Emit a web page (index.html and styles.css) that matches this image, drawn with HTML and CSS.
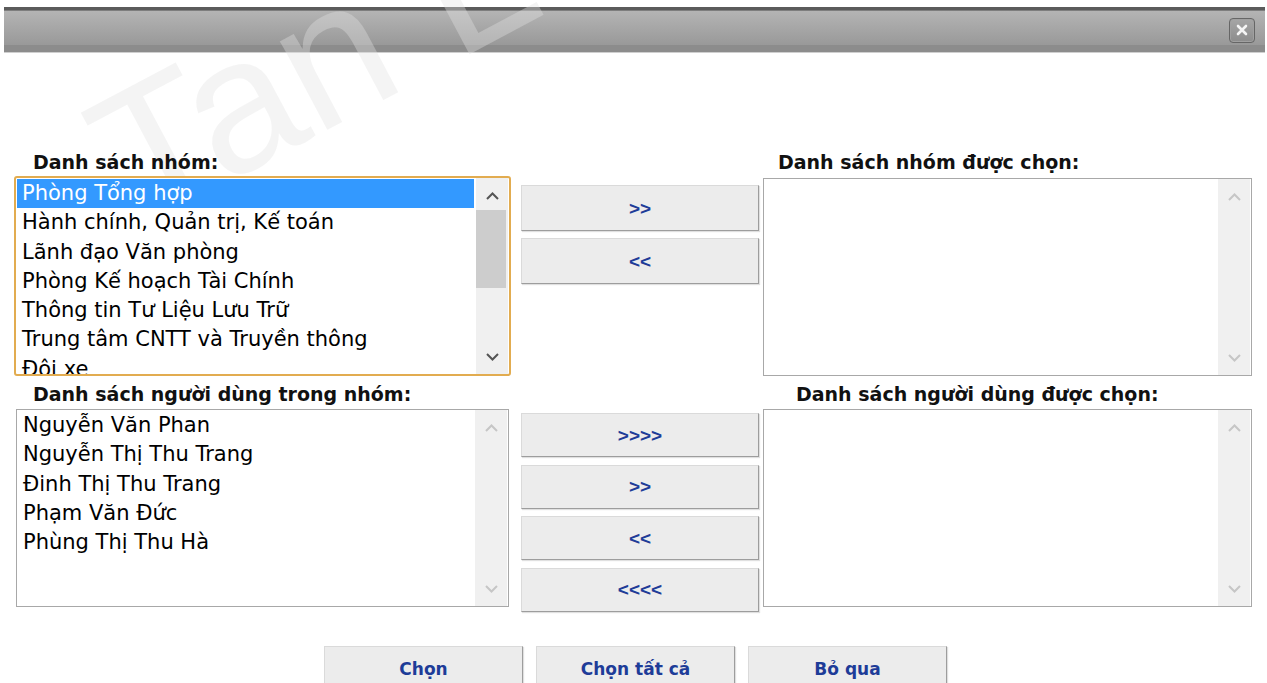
FILE: index.html
```html
<!DOCTYPE html>
<html lang="vi">
<head>
<meta charset="utf-8">
<title>Chọn người dùng</title>
<link rel="stylesheet" href="styles.css">
</head>
<body>
  <div class="titlebar">
    <button class="close" type="button" aria-label="Đóng">
      <svg width="12" height="12" viewBox="0 0 12 12"><path d="M2 2 L10 10 M10 2 L2 10" stroke="#fff" stroke-width="2.6" stroke-linecap="round"/></svg>
    </button>
  </div>

  <div class="watermark" aria-hidden="true">Tan L</div>

  <main class="content">
    <section class="picker picker-groups">
      <div class="label label-left">Danh sách nhóm:</div>
      <div class="label label-right">Danh sách nhóm được chọn:</div>

      <div class="listbox listbox-focus">
        <ul class="items">
          <li class="selected">Phòng Tổng hợp</li>
          <li>Hành chính, Quản trị, Kế toán</li>
          <li>Lãnh đạo Văn phòng</li>
          <li>Phòng Kế hoạch Tài Chính</li>
          <li>Thông tin Tư Liệu Lưu Trữ</li>
          <li>Trung tâm CNTT và Truyền thông</li>
          <li>Đội xe</li>
        </ul>
        <div class="scrollbar scrollbar-active">
          <svg class="chev" width="13" height="8" viewBox="0 0 13 8"><path d="M1 7 L6.5 1.5 L12 7" fill="none" stroke="currentColor" stroke-width="2"/></svg>
          <div class="thumb"></div>
          <div class="track-fill"></div>
          <svg class="chev" width="13" height="8" viewBox="0 0 13 8"><path d="M1 1 L6.5 6.5 L12 1" fill="none" stroke="currentColor" stroke-width="2"/></svg>
        </div>
      </div>

      <div class="moves moves-groups">
        <button class="btn btn-move" type="button">&gt;&gt;</button>
        <button class="btn btn-move" type="button">&lt;&lt;</button>
      </div>

      <div class="listbox listbox-right">
        <ul class="items"></ul>
        <div class="scrollbar">
          <svg class="chev" width="13" height="8" viewBox="0 0 13 8"><path d="M1 7 L6.5 1.5 L12 7" fill="none" stroke="currentColor" stroke-width="2"/></svg>
          <div class="track-fill"></div>
          <svg class="chev" width="13" height="8" viewBox="0 0 13 8"><path d="M1 1 L6.5 6.5 L12 1" fill="none" stroke="currentColor" stroke-width="2"/></svg>
        </div>
      </div>
    </section>

    <section class="picker picker-users">
      <div class="label label-left">Danh sách người dùng trong nhóm:</div>
      <div class="label label-right label-right-users">Danh sách người dùng được chọn:</div>

      <div class="listbox listbox-left">
        <ul class="items">
          <li>Nguyễn Văn Phan</li>
          <li>Nguyễn Thị Thu Trang</li>
          <li>Đinh Thị Thu Trang</li>
          <li>Phạm Văn Đức</li>
          <li>Phùng Thị Thu Hà</li>
        </ul>
        <div class="scrollbar">
          <svg class="chev" width="13" height="8" viewBox="0 0 13 8"><path d="M1 7 L6.5 1.5 L12 7" fill="none" stroke="currentColor" stroke-width="2"/></svg>
          <div class="track-fill"></div>
          <svg class="chev" width="13" height="8" viewBox="0 0 13 8"><path d="M1 1 L6.5 6.5 L12 1" fill="none" stroke="currentColor" stroke-width="2"/></svg>
        </div>
      </div>

      <div class="moves moves-users">
        <button class="btn btn-move btn-small" type="button">&gt;&gt;&gt;&gt;</button>
        <button class="btn btn-move btn-small" type="button">&gt;&gt;</button>
        <button class="btn btn-move btn-small" type="button">&lt;&lt;</button>
        <button class="btn btn-move btn-small" type="button">&lt;&lt;&lt;&lt;</button>
      </div>

      <div class="listbox listbox-right">
        <ul class="items"></ul>
        <div class="scrollbar">
          <svg class="chev" width="13" height="8" viewBox="0 0 13 8"><path d="M1 7 L6.5 1.5 L12 7" fill="none" stroke="currentColor" stroke-width="2"/></svg>
          <div class="track-fill"></div>
          <svg class="chev" width="13" height="8" viewBox="0 0 13 8"><path d="M1 1 L6.5 6.5 L12 1" fill="none" stroke="currentColor" stroke-width="2"/></svg>
        </div>
      </div>
    </section>

    <div class="actions">
      <button class="btn btn-action" type="button">Chọn</button>
      <button class="btn btn-action" type="button">Chọn tất cả</button>
      <button class="btn btn-action" type="button">Bỏ qua</button>
    </div>
  </main>
</body>
</html>
```

FILE: styles.css
```css
* {
  box-sizing: border-box;
}

html,
body {
  margin: 0;
  padding: 0;
  background: #fff;
}

body {
  position: relative;
  width: 1267px;
  height: 683px;
  overflow: hidden;
  font-family: "DejaVu Sans", "Liberation Sans", sans-serif;
  color: #000;
}

/* Window header */
.titlebar {
  margin: 7px 2px 0 4px;
  height: 46px;
  padding-right: 10px;
  display: flex;
  align-items: center;
  justify-content: flex-end;
  background: linear-gradient(to bottom,
    #5b5b5b 0, #5b5b5b 3px,
    #7e7e7e 3px, #7e7e7e 4px,
    #b4b4b4 4px, #999999 38px,
    #8c8c8c 38px, #8c8c8c 45px,
    #cfcfcf 45px, #cfcfcf 46px);
}

.close {
  width: 26px;
  height: 25px;
  padding: 0;
  border: 1px solid #666;
  border-radius: 4px;
  background: linear-gradient(to bottom, #a6a6a6, #8c8c8c);
  box-shadow: inset 0 0 0 1px #a0a0a0;
  display: flex;
  align-items: center;
  justify-content: center;
}

.close svg {
  opacity: 0.9;
}

/* Site stamp across the top-left corner */
.watermark {
  position: absolute;
  left: 63px;
  top: 88px;
  z-index: 1;
  font-family: "Liberation Sans", sans-serif;
  font-size: 190px;
  line-height: 1;
  white-space: pre;
  color: rgba(225, 225, 225, 0.38);
  transform: rotate(-28deg);
  transform-origin: 0 0;
  pointer-events: none;
}

.content {
  position: relative;
  z-index: 2;
}

/* Two-list pickers */
.picker {
  display: grid;
  grid-template-columns: 497px 252px 489px;
  grid-template-rows: 22px auto;
  padding-left: 14px;
  align-items: start;
}

.picker-groups {
  margin-top: 98px;
  row-gap: 3px;
}

.picker-users {
  margin-top: 7px;
  row-gap: 4px;
}

.label {
  font-size: 19px;
  line-height: 22px;
  font-weight: bold;
  color: #111;
  white-space: nowrap;
}

.label-left {
  grid-column: 1;
  padding-left: 19px;
}

.label-right {
  grid-column: 3;
  padding-left: 15px;
}

.label-right-users {
  padding-left: 33px;
}

.listbox {
  display: flex;
  height: 198px;
  background: #fff;
  border: 1px solid #a8a8a8;
  overflow: hidden;
}

.listbox-focus {
  grid-column: 1;
  height: 200px;
  border: 2px solid #e2ac50;
  border-radius: 3px;
}

.listbox-left {
  grid-column: 1;
  width: 493px;
  margin-left: 2px;
}

.listbox-right {
  grid-column: 3;
}

.picker-groups .listbox-right {
  margin-top: 2px;
}

.items {
  flex: 1;
  min-width: 0;
  margin: 0;
  padding: 1px 2px 0 1px;
  list-style: none;
  overflow: hidden;
}

.items li {
  padding-left: 5px;
  font-size: 21px;
  line-height: 29.3px;
  white-space: nowrap;
}

.items li.selected {
  background: #3399ff;
  color: #fff;
}

/* Vertical scroll bars */
.scrollbar {
  width: 32px;
  margin-right: 1px;
  padding: 14px 0 13px;
  display: flex;
  flex-direction: column;
  align-items: center;
  background: #f0f0f0;
  color: #c6c6c6;
}

.scrollbar-active {
  color: #555;
}

.chev {
  display: block;
  flex: none;
}

.thumb {
  align-self: stretch;
  height: 78px;
  margin: 10px 2px 0 0;
  background: #cdcdcd;
}

.track-fill {
  flex: 1;
}

/* Move buttons between lists */
.moves {
  grid-column: 2;
  grid-row: 2;
  display: flex;
  flex-direction: column;
  padding: 0 4px 0 10px;
}

.moves-groups {
  padding-top: 9px;
  gap: 7px;
}

.moves-users {
  padding-top: 4px;
  gap: 7.5px;
}

.btn {
  margin: 0;
  padding: 0;
  font-family: "DejaVu Sans", "Liberation Sans", sans-serif;
  font-weight: bold;
  color: #1e3c98;
  background: #ececec;
  border: 1px solid #dadada;
  border-right-color: #9d9d9d;
  border-bottom-color: #9d9d9d;
  box-shadow: 1px 1px 1px rgba(0, 0, 0, 0.12);
}

.btn-move {
  width: 238px;
  height: 46px;
  font-family: "Liberation Sans", "DejaVu Sans", sans-serif;
  font-size: 19px;
  line-height: 1;
}

.btn-small {
  height: 44px;
}

/* Dialog actions */
.actions {
  display: flex;
  justify-content: center;
  gap: 13px;
  margin-top: 34.5px;
  padding-left: 4px;
}

.btn-action {
  width: 199px;
  height: 45px;
  font-size: 17px;
}
```
